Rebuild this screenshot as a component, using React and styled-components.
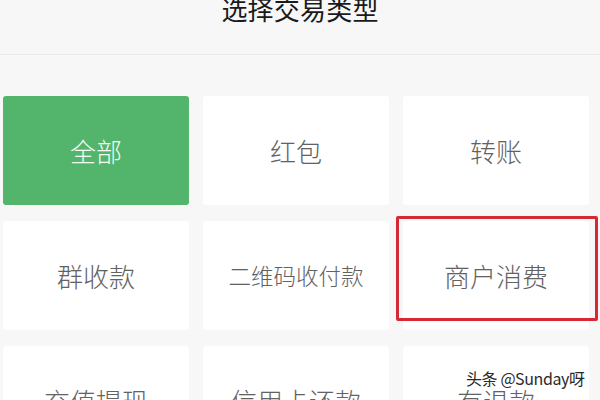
import React from "react";
import styled, { createGlobalStyle } from "styled-components";

const Global = createGlobalStyle`
  html, body { margin: 0; padding: 0; background: #f7f7f7; overflow: hidden; }
  body { font-family: "Noto Sans CJK SC", "Noto Sans", sans-serif; }
`;

const Page = styled.div`
  position: relative;
  width: 600px;
  height: 400px;
  overflow: hidden;
  background: #f7f7f7;
`;

const Header = styled.div`
  height: 55px;
  border-bottom: 1px solid #ebebeb;
  display: flex;
  justify-content: center;
  align-items: flex-start;
  box-sizing: border-box;
`;

const Title = styled.h1`
  margin: -4px 0 0;
  font-size: 26px;
  line-height: 26px;
  font-weight: 400;
  color: #1a1a1a;
  letter-spacing: 0.2px;
`;

const Grid = styled.div`
  display: grid;
  grid-template-columns: repeat(3, 186px);
  grid-auto-rows: 109px;
  column-gap: 14px;
  row-gap: 16px;
  padding: 41px 0 0 3px;
`;

const Cell = styled.div`
  position: relative;
  display: flex;
  align-items: center;
  justify-content: center;
  border-radius: 3px;
  background: ${(p) => (p.$active ? "#52b56b" : "#ffffff")};
  color: ${(p) => (p.$active ? "#f2fbf4" : "#626262")};
  font-size: ${(p) => (p.$small ? "22.5px" : "26px")};
  font-weight: 300;
  line-height: 1;
`;

const Highlight = styled.div`
  position: absolute;
  left: -7px;
  top: -5px;
  width: 202px;
  height: 105px;
  box-sizing: border-box;
  border: 3px solid #d52a36;
  border-radius: 2px;
  pointer-events: none;
`;

const Watermark = styled.div`
  position: absolute;
  left: 466px;
  top: 369px;
  font-size: 16px;
  line-height: 19px;
  color: #2a2a2a;
  text-shadow: 0 0 2px #fff, 0 0 2px #fff;
  letter-spacing: -0.4px;
  font-family: "Noto Sans CJK SC", "Liberation Sans", sans-serif;
`;

const items = [
  "全部",
  "红包",
  "转账",
  "群收款",
  "二维码收付款",
  "商户消费",
  "充值提现",
  "信用卡还款",
  "有退款",
];

export default function App() {
  return (
    <Page>
      <Global />
      <Header>
        <Title>选择交易类型</Title>
      </Header>
      <Grid>
        {items.map((t, i) => (
          <Cell key={t} $active={i === 0} $small={t.length > 5}>
            {t}
            {i === 5 && <Highlight />}
          </Cell>
        ))}
      </Grid>
      <Watermark>头条 @Sunday呀</Watermark>
    </Page>
  );
}
